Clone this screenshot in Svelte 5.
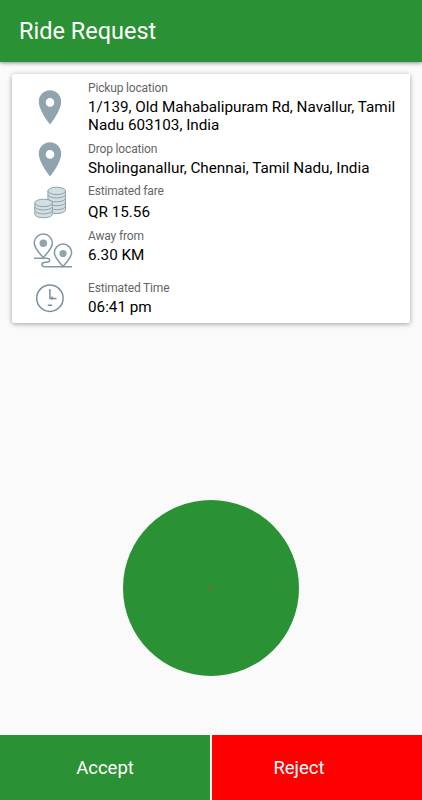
<script lang="ts">
  type Detail = {
    icon: 'pin' | 'coins' | 'route' | 'clock';
    name: string;
    label: string;
    value: string;
  };

  const details: Detail[] = [
    { icon: 'pin', name: 'pickup', label: 'Pickup location', value: '1/139, Old Mahabalipuram Rd, Navallur, Tamil Nadu 603103, India' },
    { icon: 'pin', name: 'drop', label: 'Drop location', value: 'Sholinganallur, Chennai, Tamil Nadu, India' },
    { icon: 'coins', name: 'fare', label: 'Estimated fare', value: 'QR 15.56' },
    { icon: 'route', name: 'distance', label: 'Away from', value: '6.30 KM' },
    { icon: 'clock', name: 'time', label: 'Estimated Time', value: '06:41 pm' },
  ];
</script>

{#snippet coinStack(x: number, y: number, count: number)}
  <g transform="translate({x} {y})">
    {#each Array.from({ length: count }, (_, i) => count - 1 - i) as i}
      <path
        d="M0 {3.6 + i * 3.9}v3.4c0 5 17.6 5 17.6 0v-3.4"
        fill="#d3dee3"
        stroke="#8da2ac"
        stroke-width="1"
      />
    {/each}
    <ellipse cx="8.8" cy="3.7" rx="8.8" ry="3.7" fill="#d3dee3" stroke="#8da2ac" stroke-width="1" />
  </g>
{/snippet}

<div class="screen">
  <header>
    <h1>Ride Request</h1>
  </header>

  <main>
    <section class="card">
      {#each details as item}
        <div class="detail {item.name}">
          <div class="icon {item.icon}">
            {#if item.icon === 'pin'}
              <svg width="24" height="35" viewBox="0 0 24 35">
                <path
                  fill="#90a4ae"
                  fill-rule="evenodd"
                  d="M12 .3C5.7.3.8 5.3.8 11.5c0 3.5 1.2 6.7 3.1 10.4C6 26 9 30.7 12 34.4c3-3.7 6-8.4 8.1-12.5 1.9-3.7 3.1-6.9 3.1-10.4C23.2 5.3 18.3.3 12 .3zM12 8.1a4.3 4.3 0 1 1 0 8.6 4.3 4.3 0 0 1 0-8.6z"
                />
              </svg>
            {:else if item.icon === 'coins'}
              <svg width="34" height="33" viewBox="0 0 34 33">
                {@render coinStack(14.9, 1.2, 5)}
                {@render coinStack(1.8, 13.2, 3)}
              </svg>
            {:else if item.icon === 'route'}
              <svg width="42" height="36" viewBox="0 0 42 36">
                <g fill="none" stroke="#8299a3" stroke-width="1.5">
                  <path d="M11.3 24.6C7 19.8 2.2 15.1 2.2 10.1a9.1 9.1 0 0 1 18.2 0c0 5-4.8 9.7-9.1 14.5z" />
                  <path d="M31 33.4c-4-4.5-8.6-8.9-8.6-13.7a8.6 8.6 0 0 1 17.2 0c0 4.8-4.6 9.2-8.6 13.7z" />
                  <path d="M2 25.2h12.5c4.2 0 4.2 4 .2 4h-1.2c-4.8 0-4.8 4.5 0 4.5H40" />
                </g>
                <circle cx="11.3" cy="10.3" r="3.8" fill="#90a4ae" />
                <circle cx="31" cy="20.5" r="3.6" fill="#90a4ae" />
              </svg>
            {:else}
              <svg width="30" height="30" viewBox="0 0 30 30">
                <g fill="none" stroke="#78909c" stroke-width="1.5">
                  <circle cx="14.9" cy="15.2" r="13.2" />
                  <path d="M14.9 6v9.4h6.6M17.1 13.4v3.4M12.8 22.2h4.3" />
                </g>
              </svg>
            {/if}
          </div>
          <div class="text">
            <div class="label">{item.label}</div>
            <div class="value">{item.value}</div>
          </div>
        </div>
      {/each}
    </section>

    <div class="pulse">
      <span class="dot"></span>
    </div>
  </main>

  <footer>
    <button class="accept">Accept</button>
    <button class="reject">Reject</button>
  </footer>
</div>

<style>
  :global(body) {
    margin: 0;
  }
  .screen {
    display: flex;
    flex-direction: column;
    width: 422px;
    height: 800px;
    overflow: hidden;
    background: #fafafa;
    font-family: Roboto, sans-serif;
  }
  header {
    display: flex;
    align-items: center;
    box-sizing: border-box;
    height: 62px;
    padding-left: 19px;
    background: #2a9134;
    box-shadow: 0 1px 4px rgba(0, 0, 0, 0.45);
  }
  h1 {
    margin: 0;
    color: #fff;
    font-size: 23.5px;
    font-weight: 400;
    line-height: 28px;
  }
  main {
    display: flex;
    flex: 1;
    flex-direction: column;
    align-items: center;
    padding-top: 12px;
  }
  .card {
    box-sizing: border-box;
    width: 398px;
    height: 248.5px;
    padding-top: 6px;
    border-radius: 2px;
    background: #fff;
    box-shadow: 0 1px 5px rgba(0, 0, 0, 0.36);
  }
  .detail {
    display: flex;
  }
  .pickup {
    height: 61px;
  }
  .drop {
    height: 42px;
  }
  .fare {
    height: 45px;
  }
  .distance {
    height: 52px;
  }
  .icon {
    box-sizing: border-box;
    width: 76px;
    flex: none;
  }
  .icon svg {
    display: block;
  }
  .pin {
    padding: 10px 0 0 26px;
  }
  .drop .pin {
    padding-top: 1px;
  }
  .coins {
    padding: 3px 0 0 21px;
  }
  .route {
    padding: 5px 0 0 20px;
  }
  .clock {
    padding: 3px 0 0 23px;
  }
  .label {
    padding-bottom: 1px;
    color: #666;
    font-size: 12px;
    letter-spacing: -0.16px;
    line-height: 17px;
  }
  .value {
    width: 318px;
    color: #000;
    font-size: 15.25px;
    line-height: 18px;
  }
  .fare .value {
    padding-top: 2px;
  }
  .pulse {
    display: flex;
    align-items: center;
    justify-content: center;
    width: 176px;
    height: 176px;
    margin-top: 177px;
    border-radius: 50%;
    background: #2a9134;
  }
  .dot {
    width: 2px;
    height: 2px;
    background: #e8351c;
  }
  footer {
    display: grid;
    grid-template-columns: 1fr 1fr;
    gap: 2px;
    height: 65px;
    background: #fafafa;
  }
  button {
    padding: 0;
    border: 0;
    color: #fff;
    font: 400 18.5px Roboto, sans-serif;
  }
  .accept {
    background: #2a9134;
  }
  .reject {
    padding-right: 36px;
    background: #f00;
  }
</style>
